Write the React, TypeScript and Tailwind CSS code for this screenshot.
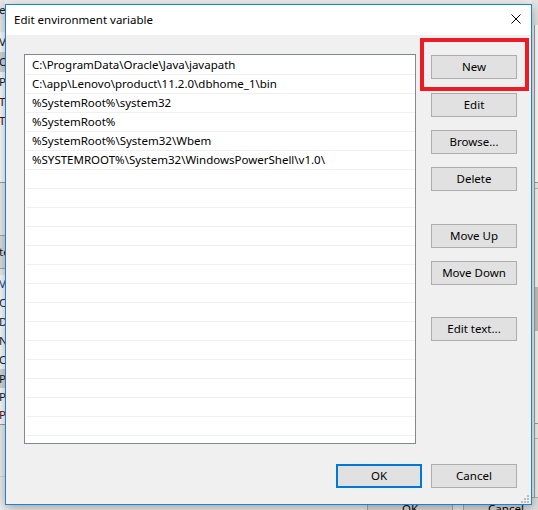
import React from "react";

const paths = [
  "C:\\ProgramData\\Oracle\\Java\\javapath",
  "C:\\app\\Lenovo\\product\\11.2.0\\dbhome_1\\bin",
  "%SystemRoot%\\system32",
  "%SystemRoot%",
  "%SystemRoot%\\System32\\Wbem",
  "%SYSTEMROOT%\\System32\\WindowsPowerShell\\v1.0\\",
];

function Btn({ label, className = "" }: { label: string; className?: string }) {
  return (
    <div
      className={`w-[86px] h-[24px] shrink-0 bg-[#e1e1e1] border border-[#adadad] flex items-center justify-center text-[11.5px] text-black leading-none ${className}`}
    >
      {label}
    </div>
  );
}

function LeftStrip() {
  const Row = ({ t, h, bg = "", c = "text-[#1a1a1a]" }: { t: string; h: number; bg?: string; c?: string }) => (
    <div className={`flex items-center whitespace-nowrap overflow-hidden ${bg} ${c}`} style={{ height: h }}>
      <span className="-ml-[1px]">{t}</span>
    </div>
  );
  return (
    <div className="absolute left-0 top-0 w-[5px] h-full overflow-hidden flex flex-col text-[11.5px] bg-[#f0f0f0]">
      <Row t="er" h={20} bg="bg-[#e8e8e8]" />
      <div className="h-[12px]" />
      <div className="flex flex-col bg-white h-[150px]">
        <Row t="Va" h={20} />
        <Row t="On" h={20} bg="bg-[#d9d9d9]" />
        <Row t="Pa" h={20} />
        <Row t="TE" h={19} c="text-[#5a1010]" />
        <Row t="TM" h={19} c="text-[#5a1010]" />
      </div>
      <div className="h-[1px] bg-[#a0a0a0]" />
      <div className="h-[52px]" />
      <div className="h-[1px] bg-[#adadad]" />
      <Row t="te" h={32} bg="bg-[#e1e1e1]" />
      <div className="h-[1px] bg-[#adadad]" />
      <div className="h-[6px]" />
      <div className="flex flex-col bg-white h-[149px]">
        <Row t="Va" h={18} c="text-[#1f3f8f]" />
        <Row t="Co" h={19} />
        <Row t="Dr" h={19} />
        <Row t="NU" h={19} />
        <Row t="OS" h={19} />
        <Row t="Pa" h={19} bg="bg-[#d9d9d9]" />
        <Row t="PA" h={18} />
        <Row t="PE" h={18} c="text-[#5a1010]" />
      </div>
      <div className="h-[1px] bg-[#a0a0a0]" />
      <div className="h-[51px]" />
      <div className="h-[1px] bg-[#dadada]" />
    </div>
  );
}

function RightStrip() {
  return (
    <div className="absolute right-0 top-0 w-[6px] h-full overflow-hidden flex flex-col bg-[#f0f0f0]">
      <div className="h-[25px] bg-[#e6e6e6]" />
      <div className="flex-1 flex">
        <div className="w-[2px]" />
        <div className="w-[1px] bg-[#a0a0a0]" />
        <div className="flex-1 flex flex-col">
          <div className="h-[157px] bg-white" />
          <div className="h-[1px] bg-[#a0a0a0]" />
          <div className="h-[5px]" />
          <div className="h-[1px] bg-[#bdbdbd]" />
          <div className="h-[98px] bg-[#f7f7f7]" />
          <div className="h-[44px] bg-[#c2c2c2]" />
          <div className="h-[92px] bg-[#f7f7f7]" />
          <div className="h-[1px] bg-[#a0a0a0]" />
          <div className="h-[14px]" />
          <div className="h-[1px] bg-[#bdbdbd]" />
        </div>
      </div>
    </div>
  );
}

export default function App() {
  return (
    <div className="relative w-[538px] h-[510px] overflow-hidden bg-[#f0f0f0] font-['Noto_Sans',sans-serif] text-black">
      {/* background window */}
      <LeftStrip />
      <RightStrip />
      <div className="absolute left-0 top-[497px] w-full h-[24px] flex pl-[367px] gap-[10px]">
        <Btn label="OK" className="w-[85px] text-[#222]" />
        <Btn label="Cancel" className="w-[86px] text-[#222]" />
      </div>

      {/* dialog */}
      <div className="absolute left-[5px] top-[4px] w-[527px] h-[501px] border border-[#1883d7] flex flex-col shadow-[0_3px_12px_rgba(0,0,0,0.35)]">
        <div className="h-[30px] shrink-0 bg-white flex items-center justify-between pl-[8px] pr-[10px]">
          <span className="text-[11.5px] leading-none">Edit environment variable</span>
          <svg width="10" height="10" viewBox="0 0 10 10" className="-mt-[2px]">
            <path d="M0.5 0.5 L9.5 9.5 M9.5 0.5 L0.5 9.5" stroke="#000" strokeWidth="1" fill="none" />
          </svg>
        </div>
        <div className="relative flex-1 bg-[#f0f0f0] flex flex-col pl-[18px] pr-[14px] pt-[19px]">
          <div className="flex">
            <div className="w-[392px] h-[390px] shrink-0 border border-[#828790] bg-white pt-[1px] overflow-hidden flex flex-col">
              {Array.from({ length: 21 }).map((_, i) => (
                <div
                  key={i}
                  className="h-[19px] shrink-0 ml-[1px] border-b border-[#f0f0f0] flex items-center pl-[6px] text-[11.5px] whitespace-nowrap"
                >
                  {paths[i] ?? ""}
                </div>
              ))}
            </div>
            <div className="ml-[15px] flex flex-col">
              <Btn label="New" className="mt-[1px]" />
              <Btn label="Edit" className="mt-[14px]" />
              <Btn label="Browse..." className="mt-[13px]" />
              <Btn label="Delete" className="mt-[13px]" />
              <Btn label="Move Up" className="mt-[33px]" />
              <Btn label="Move Down" className="mt-[13px]" />
              <Btn label="Edit text..." className="mt-[32px]" />
            </div>
          </div>
          <div className="flex justify-end gap-[9px] mt-[20px]">
            <div className="w-[86px] h-[24px] bg-[#e1e1e1] border-2 border-[#0078d7] flex items-center justify-center text-[11.5px] leading-none">
              OK
            </div>
            <Btn label="Cancel" />
          </div>
          <svg width="8" height="8" viewBox="0 0 8 8" className="absolute right-[2px] bottom-[1px]">
            <rect x="6" y="0" width="2" height="2" fill="#bcbcbc" />
            <rect x="3" y="3" width="2" height="2" fill="#bcbcbc" />
            <rect x="6" y="3" width="2" height="2" fill="#bcbcbc" />
            <rect x="0" y="6" width="2" height="2" fill="#bcbcbc" />
            <rect x="3" y="6" width="2" height="2" fill="#bcbcbc" />
            <rect x="6" y="6" width="2" height="2" fill="#bcbcbc" />
          </svg>
        </div>
      </div>

      {/* red highlight annotation */}
      <div className="absolute left-[420px] top-[38px] w-[109px] h-[53px] border-4 border-[#ed1c24]" />
    </div>
  );
}
